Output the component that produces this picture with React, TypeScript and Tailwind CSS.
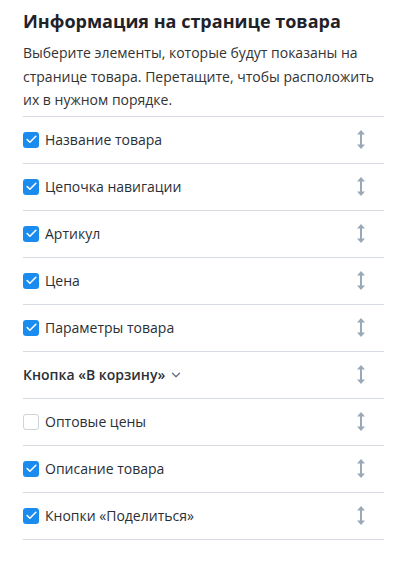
import { Check, ChevronDown } from "lucide-react";

const items = [
  { label: "Название товара", checked: true },
  { label: "Цепочка навигации", checked: true },
  { label: "Артикул", checked: true },
  { label: "Цена", checked: true },
  { label: "Параметры товара", checked: true },
  { label: "Кнопка «В корзину»", group: true },
  { label: "Оптовые цены", checked: false },
  { label: "Описание товара", checked: true },
  { label: "Кнопки «Поделиться»", checked: true },
];

const DragIcon = () => (
  <svg width="8" height="19" viewBox="0 0 8 19" fill="#9aa9b8">
    <path d="M4 0 L8 4.5 H5 V14.5 H8 L4 19 L0 14.5 H3 V4.5 H0 Z" />
  </svg>
);

export default function App() {
  return (
    <div
      className="bg-white min-h-[564px] px-[23px] pt-[9px] text-[#222]"
      style={{ fontFamily: '"Open Sans", sans-serif' }}
    >
      <h2 className="text-[18px] font-bold leading-[24px] text-[#1f2329]">
        Информация на странице товара
      </h2>
      <p className="mt-[8px] text-[14px] leading-[23.5px] text-[#333] w-[365px]">
        Выберите элементы, которые будут показаны на странице товара. Перетащите, чтобы расположить их в нужном порядке.
      </p>
      <div className="mt-[4px] w-[361px] border-t border-[#d5dbe1]">
        {items.map((item, i) => (
          <div
            key={i}
            className="h-[47px] flex items-center border-b border-[#d5dbe1]"
          >
            {item.group ? (
              <div className="flex items-center gap-[4px] text-[14px] font-semibold text-[#2a2f36]">
                <span>{item.label}</span>
                <ChevronDown className="w-[14px] h-[14px] text-[#6b7785]" strokeWidth={2.5} />
              </div>
            ) : (
              <label className="flex items-center gap-[6px] text-[14px] text-[#2a2f36]">
                {item.checked ? (
                  <span className="w-[16px] h-[16px] rounded-[3px] bg-[#1a8cf0] flex items-center justify-center">
                    <Check className="w-[13px] h-[13px] text-white" strokeWidth={3} />
                  </span>
                ) : (
                  <span className="w-[16px] h-[16px] rounded-[3px] border border-[#cdd3da] bg-white" />
                )}
                <span>{item.label}</span>
              </label>
            )}
            <div className="ml-auto mr-[19px] flex items-center">
              <DragIcon />
            </div>
          </div>
        ))}
      </div>
    </div>
  );
}
